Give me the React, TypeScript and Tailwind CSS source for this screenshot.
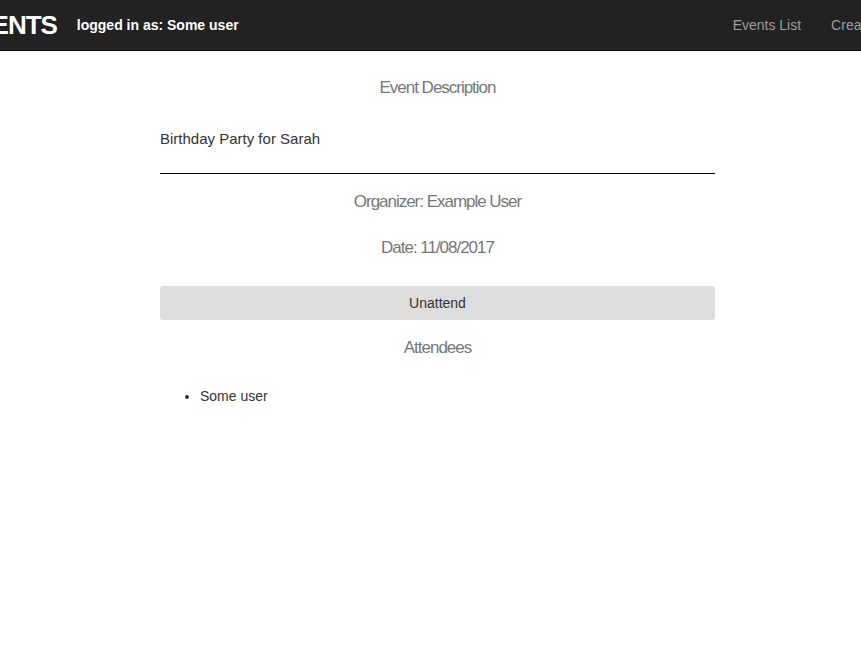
import React from "react";

export default function App() {
  const heading =
    "text-center text-[17px] text-[#777] tracking-[-0.06em] leading-[20px]";
  return (
    <div className="min-h-[646px] bg-white font-['Liberation_Sans',Arial,sans-serif] text-[#333]">
      <nav className="h-[51px] bg-[#222] border-b border-[#080808] overflow-hidden">
        <div className="flex items-center h-[50px] whitespace-nowrap">
          <span className="-ml-[41px] text-[26px] font-bold text-white tracking-[-0.04em]">
            EVENTS
          </span>
          <span className="ml-[20px] text-[14px] font-bold text-white">
            logged in as: Some user
          </span>
          <a className="text-[14px] text-[#9d9d9d] mr-[30px] ml-[494px]">Events List</a>
          <a className="text-[14px] text-[#9d9d9d]">Create Event</a>
        </div>
      </nav>
      <main className="ml-[160px] w-[555px] flex flex-col">
        <h2 className={`${heading} mt-[27px]`}>Event Description</h2>
        <p className="mt-[31px] text-[15px] leading-[20px]">Birthday Party for Sarah</p>
        <hr className="mt-[24px] border-t border-black" />
        <h3 className={`${heading} mt-[18px]`}>Organizer: Example User</h3>
        <h3 className={`${heading} mt-[26px]`}>Date: 11/08/2017</h3>
        <button className="mt-[28px] h-[34px] rounded-[3px] bg-[#ddd] text-[14px] text-[#333]">
          Unattend
        </button>
        <h3 className={`${heading} mt-[18px]`}>Attendees</h3>
        <ul className="mt-[28px] list-disc pl-[40px] text-[14px] leading-[20px]">
          <li>Some user</li>
        </ul>
      </main>
    </div>
  );
}
